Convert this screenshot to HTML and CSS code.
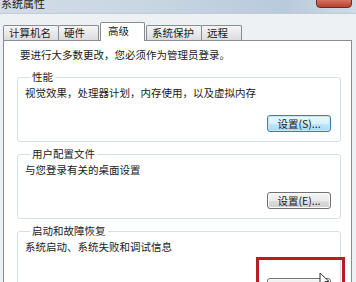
FILE: index.html
```html
<!DOCTYPE html>
<html lang="zh-CN">
<head>
    <meta charset="UTF-8">
    <meta name="viewport" content="width=device-width, initial-scale=1.0">
    <title>系统属性</title>
    <link rel="stylesheet" href="styles.css">
</head>
<body>

<div class="window">
    <div class="titlebar">
        <span class="title">系统属性</span>
        <span class="close"></span>
    </div>

    <div class="frame">
        <div class="tabs">
            <div class="tab">计算机名</div>
            <div class="tab">硬件</div>
            <div class="tab active">高级</div>
            <div class="tab">系统保护</div>
            <div class="tab">远程</div>
        </div>

        <div class="panel">
            <p class="note">要进行大多数更改，您必须作为管理员登录。</p>

            <fieldset class="group">
                <legend>性能</legend>
                <p>视觉效果，处理器计划，内存使用，以及虚拟内存</p>
                <div class="actions">
                    <button class="btn focus">设置(S)...</button>
                </div>
            </fieldset>

            <fieldset class="group">
                <legend>用户配置文件</legend>
                <p>与您登录有关的桌面设置</p>
                <div class="actions">
                    <button class="btn">设置(E)...</button>
                </div>
            </fieldset>

            <fieldset class="group">
                <legend>启动和故障恢复</legend>
                <p>系统启动、系统失败和调试信息</p>
                <div class="actions tall">
                    <button class="btn">设置(T)...</button>
                </div>
            </fieldset>
        </div>
    </div>

    <!-- red annotation box + mouse pointer drawn over the dialog -->
    <div class="mark"></div>
    <svg class="pointer" width="12" height="17" viewBox="0 0 12 17">
        <path d="M1 1 L1 13 L4 10 L6.5 15.5 L8.5 14.5 L6 9.5 L10 9.5 Z" fill="#fff" stroke="#333" stroke-width="1" stroke-linejoin="round"/>
    </svg>
</div>

</body>
</html>
```

FILE: styles.css
```css
body {
    margin: 0;
    font-family: "Noto Sans CJK SC", "Liberation Sans", sans-serif;
    font-size: 10.5px;
    color: #1a1a1a;
    background-color: #eef1f4;
}
.window {
    position: relative;
    width: 356px;
    height: 282px;
    overflow: hidden;
    background-color: #eef1f4;
}
.titlebar {
    display: flex;
    justify-content: space-between;
    align-items: flex-start;
    height: 13px;
    background: linear-gradient(to right, #d2dce6, #c9d6e3 40%, #b9cadb 80%, #cfdbe6);
    border-bottom: 1px solid #c2ccd6;
}
.title {
    margin: -3px 0 0 1px;
    font-size: 11px;
    line-height: 12px;
    color: #222;
}
.close {
    width: 34px;
    height: 8px;
    margin: -2px 4px 0 0;
    background: linear-gradient(#d9786a, #bb3f2c);
    border: 1px solid #6b2a22;
    border-radius: 0 0 4px 4px;
}
.frame {
    padding: 0 4px 0 3px;
}
.tabs {
    display: flex;
    align-items: flex-end;
    height: 26px;
}
.tab {
    box-sizing: border-box;
    min-width: 41px;
    height: 15px;
    padding: 0 7px 0 5px;
    margin-right: -1px;
    line-height: 14px;
    border: 1px solid #898c95;
    border-bottom: none;
    border-radius: 2px 2px 0 0;
    background: linear-gradient(#f6f6f6, #dcdcdc);
    white-space: nowrap;
}
.tab.active {
    position: relative;
    z-index: 1;
    min-width: 45px;
    height: 19px;
    margin: 0 1px -1px 2px;
    padding: 1px 7px 0 7px;
    background: #fff;
}
.panel {
    height: 260px;
    border: 1px solid #898c95;
    background-color: #fff;
}
.note {
    margin: 7px 0 0 16px;
    line-height: 14px;
}
.group {
    margin: 8px 10px 5px 13px;
    padding: 2px 9px 9px 7px;
    border: 1px solid #d5dfe5;
    border-radius: 3px;
}
.group + .group {
    margin-top: 0;
}
.group legend {
    margin-left: 5px;
    padding: 0 2px;
    line-height: 14px;
}
.group p {
    margin: 0;
    line-height: 14px;
}
.actions {
    display: flex;
    justify-content: flex-end;
    margin-top: 15px;
}
.actions.tall {
    margin-top: 24px;
}
.btn {
    box-sizing: border-box;
    width: 64px;
    height: 17px;
    padding: 0;
    font-family: inherit;
    font-size: 10.5px;
    line-height: 14px;
    color: #1a1a1a;
    border: 1px solid #707070;
    border-radius: 3px;
    background: linear-gradient(#f4f4f4 0%, #ebebeb 50%, #dddddd 51%, #cfcfcf 100%);
    box-shadow: inset 0 0 0 1px #fbfbfb;
}
.btn.focus {
    border-color: #3c7fb1;
    background: linear-gradient(#eaf6fd 0%, #d9f0fc 50%, #bee6fd 51%, #a7d9f5 100%);
    box-shadow: inset 0 0 0 1px #c4e5f6;
}
.mark {
    position: absolute;
    left: 256px;
    top: 257px;
    width: 83px;
    height: 40px;
    border: 3px solid #b81d24;
}
.pointer {
    position: absolute;
    left: 319px;
    top: 272px;
}
```
